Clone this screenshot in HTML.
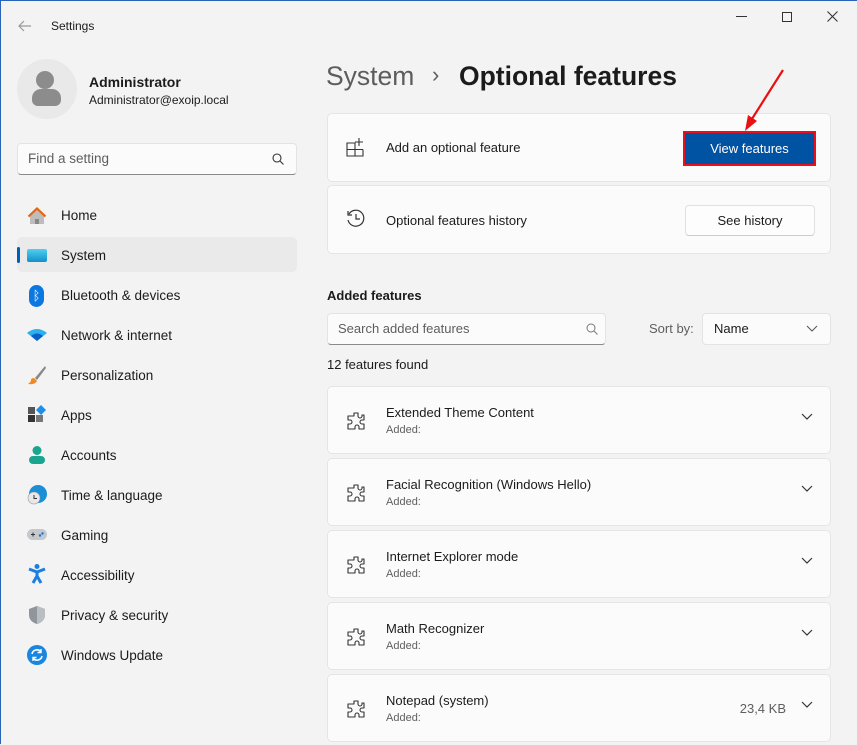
<!DOCTYPE html>
<html><head><style>
*{box-sizing:border-box;margin:0;padding:0}
body{width:857px;height:744px;background:#f3f3f3;font-family:"Liberation Sans",sans-serif;color:#1b1b1b;position:relative;overflow:hidden}
#w{position:absolute;left:0;top:1px;width:857px;height:744px}
.a{position:absolute}
.t{font-size:13px}
.card{position:absolute;left:327px;width:504px;background:#fbfbfb;border:1px solid #e5e5e5;border-radius:5px}
.nav{position:absolute;left:61px;font-size:13.5px}
.ic{position:absolute;left:27px;width:20px;height:20px}
.feat .n{position:absolute;left:58px;top:18px;font-size:13px}
.feat .s{position:absolute;left:58px;top:37px;font-size:11px;color:#616161}
.chev{position:absolute;right:17px;top:26px}
</style></head><body>
<div class="a" style="left:0;top:0;width:1px;height:744px;background:#2a62b8;z-index:9"></div>
<div class="a" style="left:0;top:0;width:857px;height:1px;background:#2a62b8;z-index:9"></div>
<div id="w">
<svg class="a" style="left:17px;top:18px" width="16" height="14"><path d="M14 7H2M7 2L2 7l5 5" stroke="#999" fill="none" stroke-width="1.2"/></svg>
<div class="a" style="left:51px;top:18px;font-size:12px">Settings</div>
<div class="a" style="left:736px;top:15px;width:11px;height:1px;background:#333"></div>
<div class="a" style="left:782px;top:11px;width:10px;height:10px;border:1px solid #333"></div>
<svg class="a" style="left:827px;top:10px" width="11" height="11"><path d="M0.5 0.5l10 10M10.5 0.5l-10 10" stroke="#333" stroke-width="1.1"/></svg>
<div class="a" style="left:17px;top:58px;width:60px;height:60px;border-radius:50%;background:#e9e9e9"></div>
<div class="a" style="left:36px;top:70px;width:18px;height:18px;border-radius:50%;background:#8c8c8c"></div>
<div class="a" style="left:32px;top:88px;width:29px;height:17px;border-radius:9px 9px 6px 6px;background:#8c8c8c"></div>
<div class="a" style="left:89px;top:73px;font-size:14px;font-weight:bold">Administrator</div>
<div class="a" style="left:89px;top:92px;font-size:12px">Administrator@exoip.local</div>
<div class="a" style="left:17px;top:142px;width:280px;height:32px;background:#fbfbfb;border:1px solid #e3e3e3;border-bottom-color:#8a8a8a;border-radius:4px"></div>
<div class="a" style="left:28px;top:150px;font-size:13.5px;color:#5e5e5e">Find a setting</div>
<svg class="a" style="left:271px;top:151px" width="14" height="14"><circle cx="6" cy="6" r="4" stroke="#333" fill="none" stroke-width="1.1"/><path d="M9 9l3.5 3.5" stroke="#333" stroke-width="1.1"/></svg>
<div class="a" style="left:17px;top:236px;width:280px;height:35px;background:#eaeaea;border-radius:5px"></div>
<div class="a" style="left:17px;top:246px;width:3px;height:16px;background:#005fb8;border-radius:2px"></div>
<svg class="ic" style="top:205px" viewBox="0 0 20 20"><path d="M3 10L10 3l7 7v8H3z" fill="#bdbdbd"/><path d="M1.5 10.5L10 2.5l8.5 8" stroke="#e8650a" stroke-width="2.2" fill="none"/><rect x="8" y="13" width="4" height="5" fill="#888"/></svg>
<div class="nav" style="top:207px">Home</div>
<div class="ic" style="top:248px;height:13px;background:linear-gradient(#4fd1f0,#1390c9);border-radius:2px"></div>
<div class="nav" style="top:247px">System</div>
<div class="ic" style="top:284px;left:29px;width:15px;height:22px;border-radius:8px;background:#0a78e0;color:#fff;font-size:13px;text-align:center;line-height:22px">ᛒ</div>
<div class="nav" style="top:287px">Bluetooth &amp; devices</div>
<svg class="ic" style="top:325px" viewBox="0 0 20 20"><path d="M0 7Q10-1 20 7L10 15z" fill="#2bb0f0"/><path d="M4 10Q10 5 16 10L10 15z" fill="#0a5fc8"/></svg>
<div class="nav" style="top:327px">Network &amp; internet</div>
<svg class="ic" style="top:364px" viewBox="0 0 20 20"><path d="M18 1L8 13l2 2L19 3z" fill="#888"/><path d="M7 13l3 3q-2 4-9 3 3-2 3-4t3-2z" fill="#f08a24"/></svg>
<div class="nav" style="top:367px">Personalization</div>
<svg class="ic" style="top:404px" viewBox="0 0 20 20"><rect x="1" y="2" width="7" height="7" fill="#555"/><rect x="1" y="10" width="7" height="7" fill="#333"/><rect x="9" y="10" width="7" height="7" fill="#777"/><path d="M14 0l5 5-5 5-5-5z" fill="#1e8fe8"/></svg>
<div class="nav" style="top:407px">Apps</div>
<svg class="ic" style="top:444px" viewBox="0 0 20 20"><circle cx="10" cy="5.5" r="4.5" fill="#1aa68e"/><rect x="2" y="11" width="16" height="8" rx="4" fill="#1aa68e"/></svg>
<div class="nav" style="top:447px">Accounts</div>
<svg class="ic" style="top:484px" viewBox="0 0 20 20"><circle cx="11" cy="9" r="9" fill="#1a8fd8"/><circle cx="7" cy="13" r="6" fill="#e8e8e8" stroke="#999" stroke-width=".6"/><path d="M7 10v3.5h3" stroke="#333" fill="none"/></svg>
<div class="nav" style="top:487px">Time &amp; language</div>
<svg class="ic" style="top:524px" viewBox="0 0 20 20"><rect x="0" y="4" width="20" height="11" rx="5.5" fill="#c5c8cc"/><path d="M4 9.5h4M6 7.5v4" stroke="#333"/><circle cx="13" cy="10.5" r="1.2" fill="#1a6fd0"/><circle cx="15.5" cy="8.5" r="1.2" fill="#1a6fd0"/></svg>
<div class="nav" style="top:527px">Gaming</div>
<svg class="ic" style="top:563px" viewBox="0 0 20 20"><circle cx="10" cy="2.5" r="2.5" fill="#1a7fe0"/><path d="M2 5l8 3 8-3M10 8v4l-4 7M10 12l4 7" stroke="#1a7fe0" stroke-width="3" fill="none"/></svg>
<div class="nav" style="top:567px">Accessibility</div>
<svg class="ic" style="top:604px" viewBox="0 0 20 20"><path d="M10 1l8 3v6c0 5-4 8-8 9-4-1-8-4-8-9V4z" fill="#8f959b"/><path d="M10 1l8 3v6c0 5-4 8-8 9z" fill="#b9bec3"/></svg>
<div class="nav" style="top:607px">Privacy &amp; security</div>
<svg class="ic" style="top:644px" viewBox="0 0 20 20"><circle cx="10" cy="10" r="10" fill="#1a86e0"/><path d="M5 9a5 5 0 0 1 9-2M15 11a5 5 0 0 1-9 2" stroke="#fff" stroke-width="1.6" fill="none"/><path d="M14 4v3.5h-3.5M6 16v-3.5h3.5" stroke="#fff" stroke-width="1.4" fill="none"/></svg>
<div class="nav" style="top:647px">Windows Update</div>

<div class="a" style="left:326px;top:60px;font-size:26.5px;color:#5d5d5d">System</div>
<div class="a" style="left:432px;top:61px;font-size:22px;color:#5d5d5d">›</div>
<div class="a" style="left:459px;top:60px;font-size:26.5px;font-weight:bold;color:#1b1b1b">Optional features</div>

<div class="card" style="top:112px;height:69px">
<svg class="a" style="left:18px;top:23px" width="20" height="20"><path d="M1 6h8v13H1zM1 12.5h16M9 12.5v6.5h8v-6.5M13 1v8M9 5h8" stroke="#333" fill="none" stroke-width="1.1"/></svg>
<div class="a t" style="left:58px;top:26px">Add an optional feature</div>
<div class="a" style="left:355px;top:17px;width:133px;height:35px;border:2px solid #e8101c;background:#0052a3;color:#fff;font-size:13px;text-align:center;line-height:31px">View features</div>
</div>
<div class="card" style="top:184px;height:69px">
<svg class="a" style="left:17px;top:22px" width="22" height="22"><path d="M4 6a8 8 0 1 1-1 6" stroke="#333" fill="none" stroke-width="1.2"/><path d="M3 3v4h4M11 6v5h4" stroke="#333" fill="none" stroke-width="1.2"/></svg>
<div class="a t" style="left:58px;top:27px">Optional features history</div>
<div class="a" style="left:357px;top:19px;width:130px;height:31px;border:1px solid #e0e0e0;border-bottom-color:#ccc;border-radius:4px;background:#fdfdfd;font-size:13px;text-align:center;line-height:29px">See history</div>
</div>
<svg class="a" style="left:738px;top:66px;z-index:5" width="50" height="70"><path d="M45 3L12 55" stroke="#e81010" stroke-width="2.2"/><path d="M7 64l3-16 9 6z" fill="#e81010"/></svg>
<div class="a" style="left:327px;top:287px;font-size:13px;font-weight:bold">Added features</div>
<div class="a" style="left:327px;top:312px;width:279px;height:32px;background:#fbfbfb;border:1px solid #e3e3e3;border-bottom-color:#8a8a8a;border-radius:4px"></div>
<div class="a" style="left:338px;top:320px;font-size:13px;color:#5e5e5e">Search added features</div>
<svg class="a" style="left:585px;top:321px" width="14" height="14"><circle cx="6" cy="6" r="4" stroke="#777" fill="none"/><path d="M9 9l3.5 3.5" stroke="#777"/></svg>
<div class="a" style="left:649px;top:320px;font-size:13px;color:#5e5e5e">Sort by:</div>
<div class="a" style="left:702px;top:312px;width:129px;height:32px;background:#fbfbfb;border:1px solid #e3e3e3;border-radius:4px"></div>
<div class="a" style="left:714px;top:320px;font-size:13px">Name</div>
<svg class="a" style="left:806px;top:324px" width="12" height="8"><path d="M1 1l5 5 5-5" stroke="#555" fill="none"/></svg>
<div class="a" style="left:327px;top:356px;font-size:13px">12 features found</div>

<div class="card feat" style="top:385px;height:68px"><svg class="a" style="left:18px;top:24px" width="20" height="20"><path d="M8 2h4v3a2 2 0 0 0 4 0V4h2v5h-2a2 2 0 0 0 0 4h2v5h-5v-2a2 2 0 0 0-4 0v2H2v-5h2a2 2 0 0 0 0-4H2V5h6z" stroke="#333" fill="none" stroke-width="1.1" stroke-linejoin="round"/></svg><div class="n">Extended Theme Content</div><div class="s">Added:</div><svg class="chev" width="12" height="8"><path d="M1 1l5 5 5-5" stroke="#333" fill="none" stroke-width="1.2"/></svg></div>
<div class="card feat" style="top:457px;height:68px"><svg class="a" style="left:18px;top:24px" width="20" height="20"><path d="M8 2h4v3a2 2 0 0 0 4 0V4h2v5h-2a2 2 0 0 0 0 4h2v5h-5v-2a2 2 0 0 0-4 0v2H2v-5h2a2 2 0 0 0 0-4H2V5h6z" stroke="#333" fill="none" stroke-width="1.1" stroke-linejoin="round"/></svg><div class="n">Facial Recognition (Windows Hello)</div><div class="s">Added:</div><svg class="chev" width="12" height="8"><path d="M1 1l5 5 5-5" stroke="#333" fill="none" stroke-width="1.2"/></svg></div>
<div class="card feat" style="top:529px;height:68px"><svg class="a" style="left:18px;top:24px" width="20" height="20"><path d="M8 2h4v3a2 2 0 0 0 4 0V4h2v5h-2a2 2 0 0 0 0 4h2v5h-5v-2a2 2 0 0 0-4 0v2H2v-5h2a2 2 0 0 0 0-4H2V5h6z" stroke="#333" fill="none" stroke-width="1.1" stroke-linejoin="round"/></svg><div class="n">Internet Explorer mode</div><div class="s">Added:</div><svg class="chev" width="12" height="8"><path d="M1 1l5 5 5-5" stroke="#333" fill="none" stroke-width="1.2"/></svg></div>
<div class="card feat" style="top:601px;height:68px"><svg class="a" style="left:18px;top:24px" width="20" height="20"><path d="M8 2h4v3a2 2 0 0 0 4 0V4h2v5h-2a2 2 0 0 0 0 4h2v5h-5v-2a2 2 0 0 0-4 0v2H2v-5h2a2 2 0 0 0 0-4H2V5h6z" stroke="#333" fill="none" stroke-width="1.1" stroke-linejoin="round"/></svg><div class="n">Math Recognizer</div><div class="s">Added:</div><svg class="chev" width="12" height="8"><path d="M1 1l5 5 5-5" stroke="#333" fill="none" stroke-width="1.2"/></svg></div>
<div class="card feat" style="top:673px;height:68px"><svg class="a" style="left:18px;top:24px" width="20" height="20"><path d="M8 2h4v3a2 2 0 0 0 4 0V4h2v5h-2a2 2 0 0 0 0 4h2v5h-5v-2a2 2 0 0 0-4 0v2H2v-5h2a2 2 0 0 0 0-4H2V5h6z" stroke="#333" fill="none" stroke-width="1.1" stroke-linejoin="round"/></svg><div class="n">Notepad (system)</div><div class="s">Added:</div><div class="a" style="right:44px;top:26px;font-size:13px;color:#5e5e5e">23,4 KB</div><svg class="chev" width="12" height="8"><path d="M1 1l5 5 5-5" stroke="#333" fill="none" stroke-width="1.2"/></svg></div>
</div>
</body></html>
